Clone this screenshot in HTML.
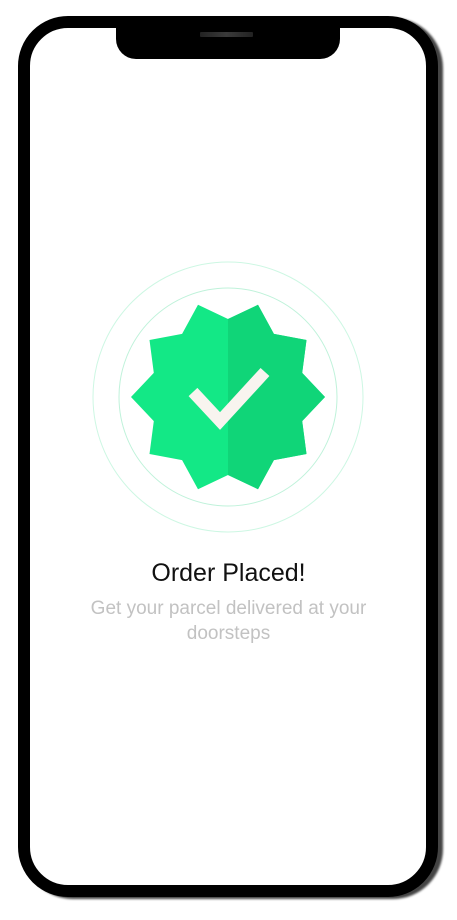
<!DOCTYPE html>
<html><head><meta charset="utf-8"><style>
html,body{margin:0;padding:0;width:457px;height:920px;background:#fff;overflow:hidden;font-family:"Liberation Sans",Arial,sans-serif}
.phone{position:absolute;left:18px;top:16px;width:396px;height:857px;border:12px solid #000;border-radius:50px;background:#fff;box-shadow:5px 2px 2px #444}
.notch{position:absolute;left:116px;top:28px;width:224px;height:31px;background:#000;border-radius:0 0 20px 20px}
.spk{position:absolute;left:200px;top:32px;width:53px;height:5px;background:linear-gradient(90deg,#222,#3a3a3a,#222);border-radius:1px}
.t{position:absolute;left:0;width:457px;text-align:center}
</style></head><body>
<div class="phone"></div>
<div class="notch"></div><div class="spk"></div>
<svg width="457" height="920" style="position:absolute;left:0;top:0">
<circle cx="228" cy="397" r="135" fill="none" stroke="#cdf7e3" stroke-width="1"/>
<circle cx="228" cy="397" r="109" fill="none" stroke="#bff2da" stroke-width="1"/>
<defs><clipPath id="r"><rect x="228" y="290" width="110" height="210"/></clipPath></defs>
<polygon fill="#13e886" points="325,397 302.2,372.9 306.5,340 273.9,333.9 258,304.8 228,319 198,304.8 182.1,333.9 149.5,340 153.8,372.9 131,397 153.8,421.1 149.5,454 182.1,460.1 198,489.2 228,475 258,489.2 273.9,460.1 306.5,454 302.2,421.1"/>
<polygon clip-path="url(#r)" fill="#10d578" points="325,397 302.2,372.9 306.5,340 273.9,333.9 258,304.8 228,319 198,304.8 182.1,333.9 149.5,340 153.8,372.9 131,397 153.8,421.1 149.5,454 182.1,460.1 198,489.2 228,475 258,489.2 273.9,460.1 306.5,454 302.2,421.1"/>
<polyline points="193,392 220,421 265,372" fill="none" stroke="#f8f4ef" stroke-width="12" stroke-linejoin="miter"/>
</svg>
<div class="t" style="top:559px;font-size:25px;color:#111">Order Placed!</div>
<div class="t" style="top:596px;font-size:19px;line-height:25px;color:#c2c2c2">Get your parcel delivered at your<br>doorsteps</div>
</body></html>
